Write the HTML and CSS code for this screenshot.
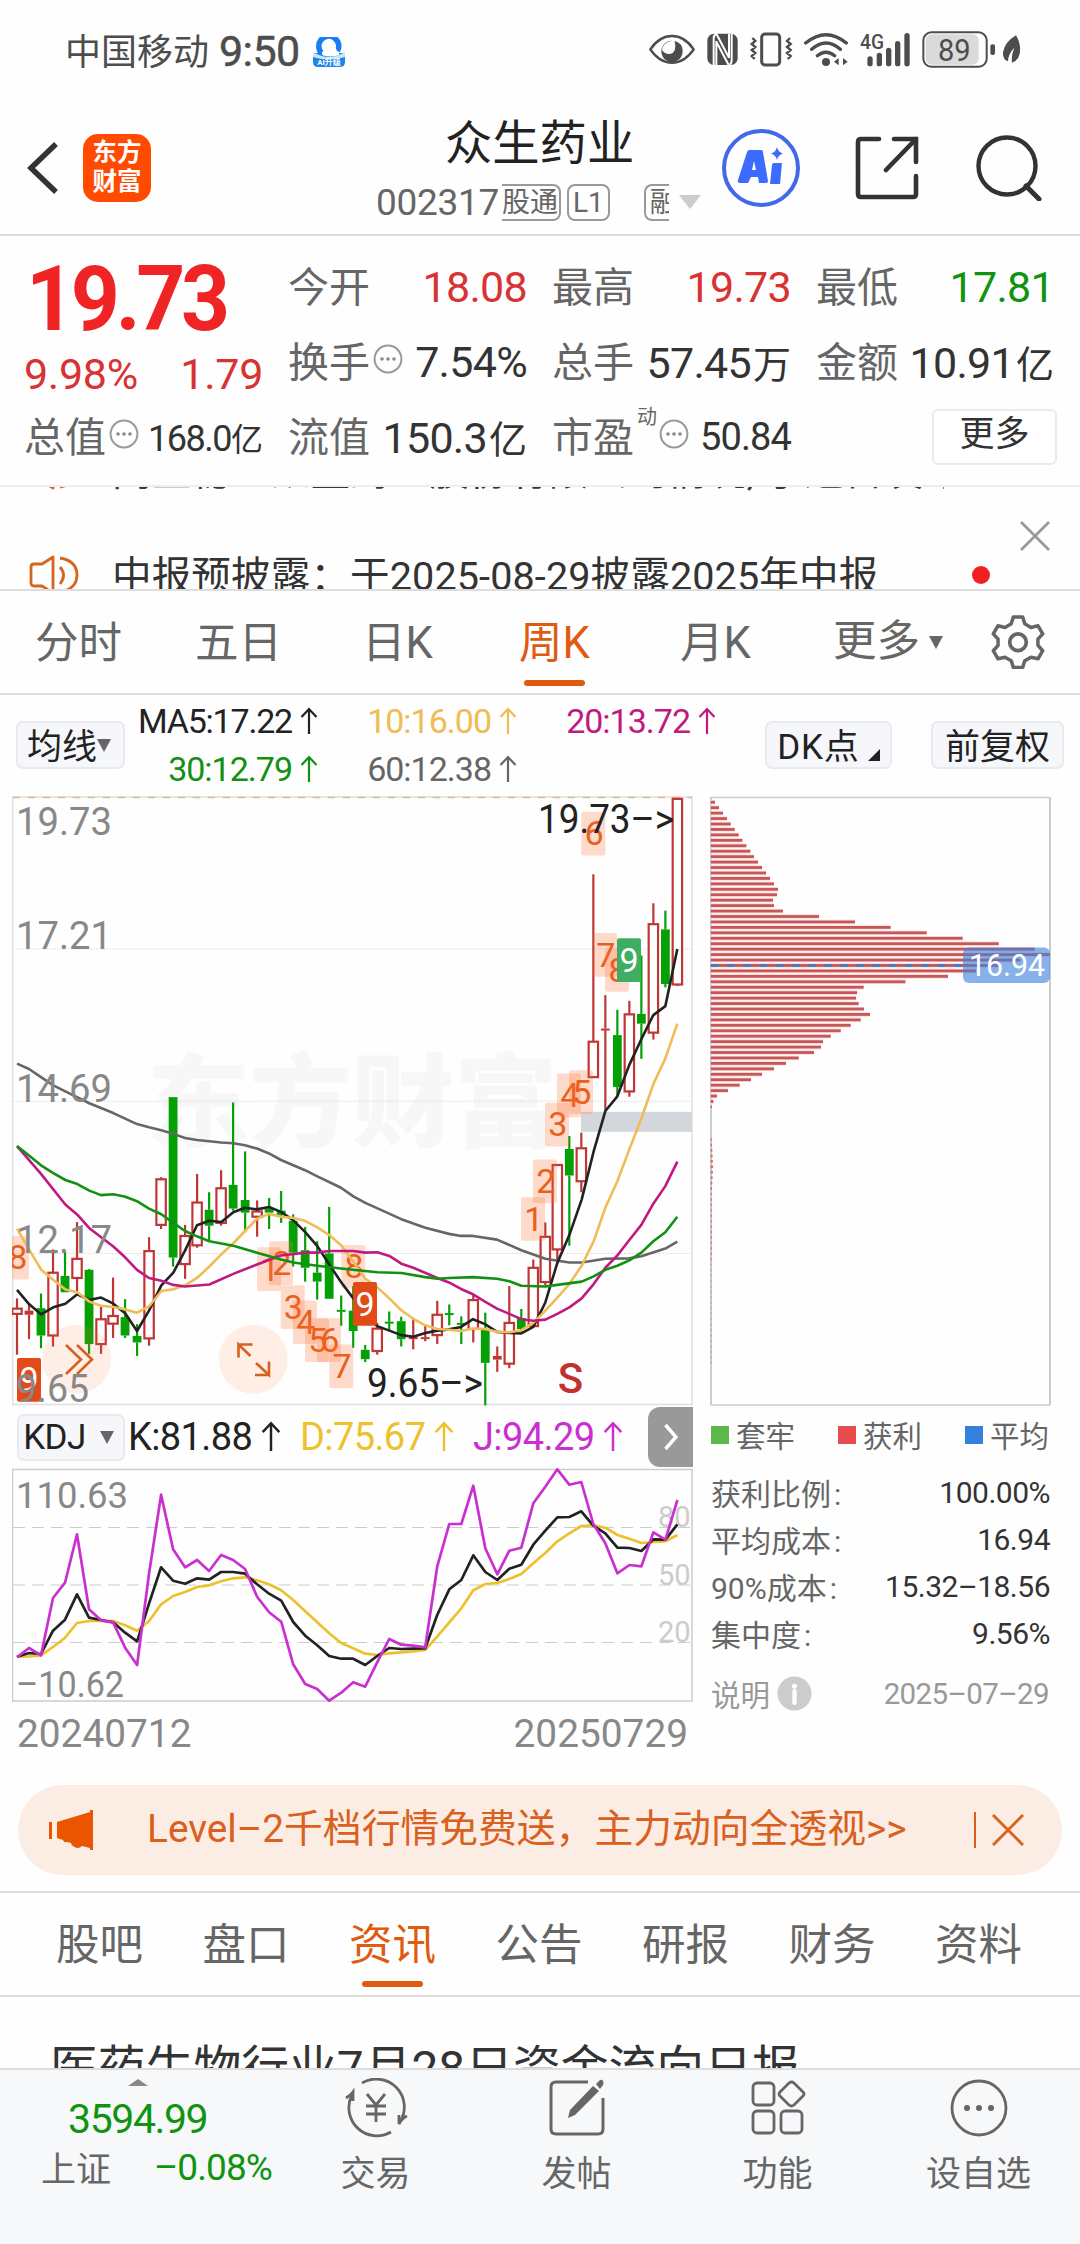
FILE: index.html
```html
<!DOCTYPE html>
<html lang="zh-CN">
<head>
<meta charset="utf-8">
<title>众生药业 002317</title>
<link rel="stylesheet" href="styles.css">
</head>
<body>
<svg class="defs" width="0" height="0">
  <symbol id="up" viewBox="0 0 18 28"><path d="M9 27V2M1.5 10 9 2l7.5 8" fill="none" stroke="currentColor" stroke-width="2.2"/></symbol>
  <symbol id="more-dot" viewBox="0 0 30 30"><circle cx="15" cy="15" r="13.4" fill="none" stroke="#999" stroke-width="2"/><circle cx="9" cy="15" r="1.8" fill="#888"/><circle cx="15" cy="15" r="1.8" fill="#888"/><circle cx="21" cy="15" r="1.8" fill="#888"/></symbol>
  <symbol id="speaker" viewBox="0 0 52 40"><path d="M2 12q0-3 3-3h8L24 2v36l-11-7H5q-3 0-3-3zM31 12q7 8 0 17M31 3q17 3 17 17T31 37" fill="none" stroke="#d4661e" stroke-width="2.8" stroke-linejoin="round"/></symbol>
</svg>
<div class="page">
  <header class="status">
    <span class="carrier">中国移动</span><span class="clock">9:50</span>
    <svg class="weather" viewBox="0 0 32 30"><path d="M0 16h32v9q0 5-5 5H5q-5 0-5-5z" fill="#1c86e8"/><path d="M0 15q16 10 32 0v5q-16 5-32 0z" fill="#c4e8fb"/><path d="M8.500 16a10 10 0 1 1 16-2" fill="none" stroke="#1b7df0" stroke-width="5.500"/><path d="M9 18q0-4 5-4 1-5 6-4 4 1 4 5 3 1 2 3-8 3-17 0z" fill="#fff"/><text x="16" y="28" text-anchor="middle" class="tiny">AI升级</text></svg>
    <svg class="status-icons" viewBox="24 30 1130 125">
      <g fill="none" stroke="#4d4d4d" stroke-width="7.5">
        <path d="M31 91Q58 51 96 51T161 91Q134 131 96 131T31 91z"/>
        <rect x="365" y="45" width="54" height="93" rx="10" stroke-width="9"/>
        <path d="M337 57l9 9-11 9 11 9-11 9 11 9-11 9 9 9M450 57l-9 9 11 9-11 9 11 9-11 9 11 9-9 9" stroke-width="7"/>
        <path d="M497 72Q558 22 619 72M515 91Q558 53 601 91M532 110Q558 89 584 110" stroke-width="10" stroke-linecap="round"/>
        <rect x="850" y="40" width="190" height="103" rx="24" stroke-width="6"/>
      </g>
      <rect x="857" y="46" width="159" height="91" rx="18" fill="#dadada"/>
      <g fill="#4d4d4d">
        <path d="M96 65a32 32 0 1 0 32 32q0-25-24-31 8 34-14 39-15 2-24-12 2-22 30-28z"/>
        <rect x="202" y="44" width="91" height="94" rx="20"/>
        <circle cx="558" cy="129" r="12"/><path d="M596 117v22l-14-11zM609 117v22l14-11z"/>
        <rect x="682" y="112" width="16" height="30" rx="8"/><rect x="710" y="101" width="16" height="41" rx="8"/><rect x="738" y="86" width="16" height="56" rx="8"/><rect x="765" y="66" width="16" height="76" rx="8"/><rect x="793" y="42" width="16" height="100" rx="8"/>
        <rect x="1051" y="76" width="14" height="32" rx="6"/>
        <path d="M1128 49q16 27 11 55-5 22-23 27-3-22 7-45-19 19-19 41-17-6-15-27 5-31 39-51z"/>
      </g>
      <path d="M221 138V58q0-9 8-14l38 72V44M229 66v72M266 138l-37-70M275 44v80q0 8-5 14" fill="none" stroke="#fff" stroke-width="6"/>
      <text x="660" y="89" class="net" textLength="72" lengthAdjust="spacingAndGlyphs">4G</text>
      <text x="943" y="125" class="batt" textLength="98" lengthAdjust="spacingAndGlyphs">89</text>
    </svg>
  </header>

  <nav class="topbar">
    <svg class="back" viewBox="0 0 32 54"><path d="M29 3 4 27l25 24" fill="none" stroke="#333" stroke-width="5.5"/></svg>
    <div class="brand">东方<br>财富</div>
    <div class="title">
      <h1>众生药业</h1>
      <div class="code-row"><span class="code">002317</span><span class="tag cut-left">股通</span><span class="tag">L1</span><span class="tag cut-right">融</span><i class="tri code-tri"></i></div>
    </div>
    <svg class="ai" viewBox="0 0 78 78"><circle cx="39" cy="39" r="37" fill="none" stroke="#4169e8" stroke-width="4"/><path d="M27 21h12q2 0 2 2l5 29q0 2-2 2h-7l-1-6h-7l-3 6h-8q-3 0-2-3l9-28q1-2 2-2zM32 32l-2 9h4zM52 34h8l-2 21h-10l2-19q0-2 2-2zM55 18q1 5 6 6.500-5 1.500-6 6.500-1-5-6-6.500 5-1.500 6-6.500z" fill="#3d6bff" fill-rule="evenodd"/></svg>
    <svg class="share" viewBox="0 0 64 64"><path d="M24 3H6Q3 3 3 6v52q0 3 3 3h52q3 0 3-3V40M39 3h22v23M61 3 31 34" fill="none" stroke="#333" stroke-width="4.6" stroke-linecap="round"/></svg>
    <svg class="search" viewBox="0 0 66 66"><circle cx="31" cy="31" r="28.5" fill="none" stroke="#333" stroke-width="4.4"/><path d="M50 51l13 13" stroke="#333" stroke-width="5" stroke-linecap="round"/></svg>
  </nav>

  <section class="quote">
    <div class="price"><strong>19.73</strong><div class="chg"><span>9.98%</span><span>1.79</span></div></div>
    <div class="cell"><label>今开</label><b class="red">18.08</b></div>
    <div class="cell"><label>最高</label><b class="red">19.73</b></div>
    <div class="cell"><label>最低</label><b class="green">17.81</b></div>
    <div class="cell"><label>换手</label><svg class="dot3"><use href="#more-dot"/></svg><b>7.54%</b></div>
    <div class="cell"><label>总手</label><b>57.45<i>万</i></b></div>
    <div class="cell"><label>金额</label><b>10.91<i>亿</i></b></div>
    <div class="cell small"><label>总值</label><svg class="dot3"><use href="#more-dot"/></svg><b class="cap">168.0<i>亿</i></b></div>
    <div class="cell"><label>流值</label><b>150.3<i>亿</i></b></div>
    <div class="cell small"><label>市盈</label><sup>动</sup><svg class="dot3 pe"><use href="#more-dot"/></svg><b>50.84</b></div>
    <div class="cell"><button class="more-btn">更多</button></div>
  </section>

  <section class="news">
    <div class="ticker">
      <div class="line"><svg><use href="#speaker"/></svg><span>问董秘：众生药业股份有限公司情况, 于近日发布</span></div>
      <div class="line"><svg><use href="#speaker"/></svg><span>中报预披露：于2025-08-29披露2025年中报</span></div>
    </div>
    <i class="reddot"></i>
    <svg class="close" viewBox="0 0 30 30"><path d="M1 1l28 28M29 1 1 29" stroke="#999" stroke-width="2.8"/></svg>
  </section>

  <nav class="periods">
    <span>分时</span><span>五日</span><span>日K</span><span class="on">周K</span><span>月K</span><span class="more">更多<i class="tri"></i></span>
    <svg class="gear" viewBox="0 0 52 52"><path d="M21.500 2h9l2 6.500 6 3.500 6.800-1.600 4.500 7.800-4.600 5v6l4.600 5.200-4.500 7.800-6.800-1.600-6 3.400-2 6.500h-9l-2-6.500-6-3.400-6.800 1.600-4.500-7.800 4.600-5.200v-6l-4.600-5 4.500-7.800 6.800 1.600 6-3.500z" fill="none" stroke="#666" stroke-width="3.4" stroke-linejoin="round"/><circle cx="26" cy="26.200" r="8" fill="none" stroke="#666" stroke-width="3.600"/></svg>
  </nav>

  <section class="ma">
    <button class="chip">均线<i class="tri"></i></button>
    <div class="ma-grid">
      <span class="c-black">MA5:17.22<svg><use href="#up"/></svg></span><span class="c-yellow">10:16.00<svg><use href="#up"/></svg></span><span class="c-pink">20:13.72<svg><use href="#up"/></svg></span>
      <span class="c-green">30:12.79<svg><use href="#up"/></svg></span><span class="c-gray">60:12.38<svg><use href="#up"/></svg></span>
    </div>
    <button class="chip dk">DK点<i class="corner"></i></button>
    <button class="chip fq">前复权</button>
  </section>

  <section class="charts">
    <div class="left">
      <svg id="kline" class="kline" viewBox="12 796 681 611"></svg>
      <div class="kdj-row">
        <button class="chip kdj">KDJ<i class="tri"></i></button>
        <span class="k">K:81.88<svg><use href="#up"/></svg></span><span class="d">D:75.67<svg><use href="#up"/></svg></span><span class="j">J:94.29<svg><use href="#up"/></svg></span>
        <button class="next"><svg viewBox="0 0 14 28"><path d="M1.500 2 12 14 1.500 26" fill="none" stroke="#fff" stroke-width="3.500"/></svg></button>
      </div>
      <svg id="kdj" class="kdj-chart" viewBox="12 1468 681 234"></svg>
      <div class="dates"><span>20240712</span><span>20250729</span></div>
    </div>
    <div class="right">
      <svg id="chips" class="chips" viewBox="710 796 342 611"></svg>
      <div class="legend"><span><i class="sq g"></i>套牢</span><span><i class="sq r"></i>获利</span><span><i class="sq b"></i>平均</span></div>
      <dl class="stats">
        <dt>获利比例<em>:</em></dt><dd>100.00%</dd>
        <dt>平均成本<em>:</em></dt><dd>16.94</dd>
        <dt>90%成本<em>:</em></dt><dd>15.32–18.56</dd>
        <dt>集中度<em>:</em></dt><dd>9.56%</dd>
      </dl>
      <div class="explain"><span>说明</span><svg viewBox="0 0 36 36"><circle cx="18" cy="18" r="17.500" fill="#ccc"/><circle cx="18" cy="10.500" r="2.600" fill="#fff"/><path d="M18 15.500v12" stroke="#fff" stroke-width="4.500" stroke-linecap="round"/></svg><time>2025–07–29</time></div>
    </div>
  </section>

  <aside class="banner">
    <svg class="horn" viewBox="0 0 46 40"><path d="M1 12h3v17H1zM9 12 42 2V0h3v40h-3v-2l-8-2q-4 4-9 0-2-1-2-3l-4-1q-3 1-4-2l-6-2z" fill="#eb5500"/></svg>
    <span>Level–2千档行情免费送，主力动向全透视&gt;&gt;</span>
    <i></i>
    <svg class="x" viewBox="0 0 32 32"><path d="M1 1l30 30M31 1 1 31" stroke="#e0611c" stroke-width="3"/></svg>
  </aside>

  <nav class="tabs"><span>股吧</span><span>盘口</span><span class="on">资讯</span><span>公告</span><span>研报</span><span>财务</span><span>资料</span></nav>

  <section class="article"><h2>医药生物行业7月28日资金流向日报</h2></section>

  <footer class="bottom">
    <div class="index"><i class="up-tri"></i><strong>3594.99</strong><div><span>上证</span><b>–0.08%</b></div></div>
    <div class="act"><svg viewBox="0 0 66 60"><path d="M19 5a28 28 0 0 1 38 39M48 54A28 28 0 0 1 9 17M3 20q5-3 7-6v9M64 38q-5 2-8 8V37" fill="none" stroke="#666" stroke-width="2.800"/><path d="M24 16l9 11 9-11M23 28h20M23 36h20M33 27v17" fill="none" stroke="#666" stroke-width="2.800"/></svg><span>交易</span></div>
    <div class="act"><svg viewBox="0 0 66 60"><path d="M44 4H12q-5 0-5 5v42q0 5 5 5h42q5 0 5-5V20" fill="none" stroke="#666" stroke-width="3"/><path d="M49 8l6 5-24 24-7 3 2-8zM52 6l4-4q2-1 3 1t0 4l-3 4z" fill="#666"/></svg><span>发帖</span></div>
    <div class="act"><svg viewBox="0 0 66 60"><g fill="none" stroke="#666" stroke-width="2.800"><rect x="8" y="5" width="21" height="22" rx="4"/><rect x="8" y="33" width="21" height="22" rx="4"/><rect x="36" y="33" width="21" height="22" rx="4"/><path d="M44 5q2.500-2 5 0l9 9q2 2 0 4l-9 9q-2.500 2-5 0l-9-9q-2-2 0-4z"/></g></svg><span>功能</span></div>
    <div class="act"><svg viewBox="0 0 66 60"><circle cx="33" cy="30" r="27" fill="none" stroke="#666" stroke-width="2.800"/><circle cx="21" cy="30" r="3" fill="#666"/><circle cx="33" cy="30" r="3" fill="#666"/><circle cx="45" cy="30" r="3" fill="#666"/></svg><span>设自选</span></div>
  </footer>
</div>
<script src="charts.js"></script>
</body>
</html>
```
FILE: styles.css
```css
* { box-sizing: border-box; }
body { margin: 0; background: #fefefe; color: #333; font-family: Roboto, "Noto Sans CJK SC", sans-serif; }
i, em { font-style: normal; }
b { font-weight: 400; }
button { border: 0; padding: 0; font: inherit; color: inherit; background: none; }
svg { display: block; flex: none; }
.defs { position: absolute; }
.page { width: 1080px; height: 2244px; display: flex; flex-direction: column; overflow: hidden; }
.page > * { flex: none; }
.tri { width: 0; height: 0; border: 7px solid transparent; border-top: 13px solid #666; border-bottom: 0; }
.red { color: #d83232 !important; }
.green { color: #109410 !important; }

.status { height: 100px; display: flex; align-items: center; padding: 0 55px 0 65px; color: #4d4d4d; }
.carrier { font-size: 36px; width: 154px; padding-bottom: 3px; }
.clock { font-size: 43px; font-weight: 400; letter-spacing: -.6px; width: 94px; line-height: 60px; padding-top: 1px; -webkit-text-stroke: .5px currentColor; }
.weather { width: 32px; height: 30px; margin-top: 3px; }
.tiny { font-size: 8px; font-weight: 700; fill: #fff; }
.status-icons { width: 376.700px; height: 41.700px; margin-left: auto; }
.net { font-size: 62px; font-weight: 500; fill: #4d4d4d; }
.batt { font-size: 93px; font-weight: 400; fill: #4d4d4d; text-anchor: middle; }

.topbar { height: 136px; display: flex; padding: 0 37px 0 27px; border-bottom: 2px solid #ddd; }
.back { width: 32px; height: 54px; margin: 41px 24px 0 0; }
.brand { width: 68px; height: 68px; margin-top: 34px; border-radius: 15px; background: #ff4a00; color: #fff; font-weight: 700; font-size: 24.500px; line-height: 29px; text-align: center; padding-top: 4px; }
.title { width: 326px; margin-left: 225px; display: flex; flex-direction: column; }
h1 { margin: 11px 0 0 69px; font-size: 47.300px; font-weight: 400; line-height: 66px; color: #222; }
.code-row { display: flex; align-items: center; height: 50px; color: #666; }
.code { font-size: 37px; width: 126px; letter-spacing: -.3px; }
.tag { font-size: 28px; height: 37px; line-height: 33px; border: 2px solid #999; border-radius: 8px; padding: 0 4px; margin-right: 6px; letter-spacing: 0; overflow: hidden; white-space: nowrap; flex: none; }
.cut-left { border-left: 0; border-radius: 0 8px 8px 0; padding-left: 0; width: 59px; }
.cut-right { border-right: 0; border-radius: 8px 0 0 8px; width: 25px; margin: 0 10px 0 28px; padding-right: 0; }
.code-tri { border-width: 14px 11px 0; border-top-color: #ccc; }
.ai { width: 78px; height: 78px; margin: 29px 0 0 20px; }
.share { width: 64px; height: 64px; margin: 36px 0 0 55px; }
.search { width: 66px; height: 66px; margin: 35px 0 0 57px; }

.quote { height: 249px; padding: 13px 25px 0 24px; display: grid; grid-template-columns: 239px 239px 239px 238px; grid-template-rows: 75px 75px 75px; column-gap: 25px; justify-content: start; }
.price { grid-row: span 2; display: flex; flex-direction: column; color: #d83232; }
.price strong { font-size: 91px; font-weight: 700; line-height: 100px; letter-spacing: -4.500px; color: #f02424; transform: scaleX(.94); transform-origin: 0 0; margin-left: 2px; }
.chg { display: flex; justify-content: space-between; font-size: 43px; letter-spacing: -.3px; line-height: 50px; }
.cell { display: flex; align-items: center; color: #333; }
.cell label { font-size: 41px; color: #666; flex: none; margin-top: -5px; }
.cell b { margin-left: auto; font-size: 43px; letter-spacing: -.7px; white-space: nowrap; }
.cell b i { font-size: 38px; margin-left: 2px; letter-spacing: 0; }
.cell.small b { font-size: 38px; letter-spacing: -.9px; }
.cell.small .cap { font-size: 36px; letter-spacing: -1.500px; }
.cell.small b i { font-size: 32px; margin-left: 0; }
.dot3 { width: 30px; height: 30px; margin: -6px 0 0 3px; }
.pe { margin-left: 2px; }
.cell sup { font-size: 20px; line-height: 20px; color: #666; margin: -40px 0 0 3px; vertical-align: baseline; }
.more-btn { width: 125px; height: 56px; margin-left: auto; margin-right: -3px; border: 2px solid #ebebed; border-radius: 6px; font-size: 35px; line-height: 46px; padding-bottom: 4px; background: #fff; }

.news { height: 106px; display: flex; border-top: 2px solid #eee; border-bottom: 2px solid #ddd; }
.ticker { width: 944px; height: 102px; overflow: hidden; display: flex; flex-direction: column; justify-content: flex-end; }
.line { flex: none; height: 105px; display: flex; align-items: center; padding-left: 29px; font-size: 39.600px; white-space: nowrap; }
.line:last-child { margin-bottom: -36px; }
.line svg { width: 52px; height: 40px; margin: 4px 31px 0 0; }
.line span { letter-spacing: .1px; }
.reddot { width: 18px; height: 18px; border-radius: 50%; background: #f02020; margin: 79px 0 0 28px; }
.close { width: 30px; height: 30px; margin: 34px 0 0 30px; }

.periods { height: 104px; display: grid; grid-template-columns: 160px 167px 157px 161px 153px 158px 54px; justify-items: start; align-items: center; border-bottom: 2px solid #ddd; font-size: 43.500px; color: #666; padding-left: 35px; }
.periods span { height: 102px; line-height: 106px; }
.periods .more { display: flex; align-items: center; gap: 9px; }
.on { color: #e05a10; display: flex; flex-direction: column; align-items: center; }
.on::after { content: ""; width: 61px; height: 6px; border-radius: 3px; background: #e05a10; margin-top: -17px; flex: none; }
.gear { width: 54px; height: 54px; }

.ma { height: 101px; display: flex; padding: 26px 16px 0; }
.chip { height: 48px; display: flex; align-items: center; justify-content: center; border: 2px solid #e9eaee; border-radius: 7px; background: #f6f7fa; font-size: 35px; color: #222; padding-bottom: 4px; }
.chip .tri { margin-top: 5px; }
.ma .chip:first-child { width: 109px; padding-right: 3px; }
.ma-grid { display: grid; grid-template-columns: 179px 199px 199px; grid-template-rows: 48px 48px; justify-items: end; margin: -24px 0 0 14px; font-size: 34px; letter-spacing: -1px; width: 578px; }
.ma-grid span { display: flex; align-items: center; gap: 8px; height: 48px; }
.ma-grid svg { width: 18px; height: 28px; }
.ma-grid .c-black { letter-spacing: -1.200px; }
.c-black { color: #222; } .c-yellow { color: #efbc55; } .c-pink { color: #c01a80; } .c-green { color: #129012; } .c-gray { color: #666; }
.dk { width: 127px; margin-left: 48px; gap: 8px; letter-spacing: .8px; }
.corner { width: 0; height: 0; border-left: 12px solid transparent; border-bottom: 12px solid #222; margin-top: 24px; }
.fq { width: 133px; margin-left: 39px; }

.charts { height: 965px; display: flex; padding-left: 12px; }
.left { width: 681px; margin-right: 17px; }
.right { width: 342px; }
.kline { width: 681px; height: 611px; }
.kdj-row { height: 60px; display: flex; align-items: center; font-size: 38px; letter-spacing: -.6px; }
.kdj-row span { display: flex; align-items: center; gap: 9px; width: 173px; color: #222; flex: none; }
.kdj-row span svg { width: 20px; height: 33px; margin-top: -2px; }
.kdj-row .k { width: 172px; }
.kdj-row .d { color: #ecc12c; }
.kdj-row .j { color: #c930cf; width: 174px; }
.chip.kdj { width: 108px; height: 47px; margin: 0 3px 0 5px; gap: 14px; letter-spacing: -.5px; flex: none; padding: 0 5px 0 0; }
.chip.kdj .tri { margin-top: 0; }
.next { width: 45px; height: 60px; background: #999; border-radius: 12px 0 0 12px; display: flex; align-items: center; justify-content: center; margin-left: auto; }
.next svg { width: 14px; height: 28px; }
.kdj-chart { width: 681px; height: 234px; margin-top: 1px; }
.dates { display: flex; justify-content: space-between; padding: 0 5px 0 5px; font-size: 38.800px; line-height: 46px; margin-top: 9px; color: #888; }
.chips { width: 342px; height: 611px; }

.legend { display: flex; justify-content: space-between; font-size: 29.500px; color: #666; height: 59px; align-items: center; margin-top: -3px; padding: 0 3px 0 1px; }
.legend span { display: flex; align-items: center; gap: 7px; }
.sq { width: 18px; height: 18px; margin-top: 2px; }
.g { background: #5cb947; } .r { background: #e84c4c; } .b { background: #3580df; }
.stats { display: grid; grid-template-columns: auto auto; justify-content: space-between; grid-auto-rows: 47px; align-items: center; margin: 5px 0 0; padding: 0 2px 0 1px; font-size: 30px; color: #666; }
.stats em { margin-left: 3px; }
.stats dd { margin: 0; text-align: right; color: #333; letter-spacing: -.5px; padding-top: 2px; }
.explain { display: flex; align-items: center; height: 52px; margin-top: 11px; padding: 0 3px 0 1px; font-size: 29.500px; color: #999; }
.explain svg { width: 35px; height: 35px; margin-left: 7px; }
.explain time { margin-left: auto; letter-spacing: -.6px; padding-top: 2px; }

.banner { height: 90px; margin: 24px 18px 16px; border-radius: 45px; background: #fcede4; display: flex; align-items: center; color: #d9601e; padding-left: 30px; font-size: 38.800px; }
.horn { width: 46px; height: 40px; }
.banner span { margin: -11px 0 0 53px; width: 827px; white-space: nowrap; }
.banner i { width: 2px; height: 36px; background: #d9601e; margin-right: 16px; }
.x { width: 32px; height: 32px; }

.tabs { height: 106px; border-top: 2px solid #ddd; border-bottom: 2px solid #ddd; display: flex; justify-content: space-between; padding: 0 58px 0 56px; font-size: 43.500px; color: #666; }
.tabs span { height: 102px; line-height: 106px; }
.tabs .on::after { margin-top: -18px; }
.article { height: 71px; overflow: hidden; padding: 35px 0 0 50px; }
h2 { margin: 0; font-size: 47.800px; line-height: 74px; font-weight: 400; white-space: nowrap; }
.bottom { height: 178px; border-top: 2px solid #dcdcde; background: #f6f8fa; display: flex; color: #666; font-size: 35px; }
.index { width: 275px; display: flex; flex-direction: column; }
.up-tri { width: 0; height: 0; border: 10px solid transparent; border-bottom: 7px solid #888; border-top: 0; margin: 9px 0 0 128px; }
.index strong { font-size: 41px; font-weight: 400; color: #109410; line-height: 50px; margin: 8px 0 0 68px; letter-spacing: -1.400px; }
.index div { display: flex; align-items: center; justify-content: space-between; padding: 0 3px 0 41px; height: 48px; margin-top: -1px; }
.index span { margin-top: -2px; }
.index b { font-size: 37px; color: #109410; letter-spacing: -.9px; }
.act { width: 201px; display: flex; flex-direction: column; align-items: center; }
.act svg { width: 66px; height: 60px; margin-top: 8px; }
.act span { line-height: 50px; margin-top: 12px; }

.axis { font: 39.500px Roboto, sans-serif; fill: #888; }
.note { font: 40px Roboto, sans-serif; fill: #222; font-variant-ligatures: none; }
.mark { font: 34px Roboto, sans-serif; fill: #e8601c; text-anchor: middle; }
.mark.inv { fill: #fff; }
.wm { font: 900 101px "Noto Sans CJK SC", sans-serif; fill: #f7f7f7; }
.sell { font: 500 42px Roboto, sans-serif; fill: #c23030; text-anchor: middle; }
.avg { font: 31.500px Roboto, sans-serif; fill: #fff; }
.kdj-axis { font: 37.500px Roboto, sans-serif; fill: #888; }
.kdj-grid { font: 29px Roboto, sans-serif; fill: #ccc; }
```
FILE: charts.js
```js
const NS = 'http://www.w3.org/2000/svg';
function add(svg, tag, attrs, text) {
  const el = document.createElementNS(NS, tag);
  for (const key in attrs) el.setAttribute(key, attrs[key]);
  if (text !== undefined) el.textContent = text;
  svg.appendChild(el);
}
const RED = '#bf3636', GREEN = '#05a005';
/* Chart data units to pixels */
const X = v => +(v / 3).toFixed(2);
const Y = v => +(780 + v / 2.45).toFixed(2);
const slot = i => 17 + 12.007 * i;
const fit = 'spacingAndGlyphs';

/* Weekly candles: [up?, bodyTop, bodyBottom, high, low] */
const candles = [
  [1,1294,1308,1270,1408],[1,1300,1310,1285,1370],[0,1294,1361,1258,1392],[1,1206,1361,1150,1388],
  [0,1215,1255,1155,1255],[1,1172,1220,1083,1255],[0,1200,1382,1198,1406],[1,1320,1382,1290,1406],
  [1,1312,1332,1219,1367],[0,1316,1361,1272,1367],[0,1362,1378,1333,1411],[1,1153,1368,1120,1386],
  [1,977,1090,973,1100],[0,777,1170,777,1192],[1,1116,1186,1090,1222],[1,1034,1140,965,1146],
  [0,1053,1092,1010,1130],[1,999,1085,956,1092],[0,992,1050,790,1055],[0,1029,1060,910,1108],
  [1,1056,1070,1030,1119],[0,1050,1060,1024,1100],[0,1055,1066,1007,1085],[0,1080,1158,1064,1192],
  [0,1152,1195,1095,1229],[0,1207,1229,1130,1273],[0,1160,1271,1046,1271],[0,1298,1303,1263,1337],
  [0,1300,1350,1240,1391],[0,1396,1419,1384,1426],[1,1343,1399,1330,1408],[0,1327,1331,1302,1348],
  [0,1326,1370,1315,1388],[1,1365,1369,1319,1395],[1,1365,1369,1337,1375],[1,1309,1360,1276,1382],
  [0,1306,1311,1285,1336],[0,1330,1334,1314,1382],[1,1273,1345,1262,1378],[0,1345,1428,1305,1532],
  [1,1411,1420,1388,1450],[1,1329,1430,1240,1441],[0,1318,1345,1296,1352],[1,1194,1338,1175,1338],
  [1,1118,1230,1084,1238],[1,942,1150,942,1175],[0,904,969,872,1141],[1,901,983,864,1010],
  [1,640,728,231,728],[1,609,613,527,808],[0,625,752,563,775],[1,573,763,541,776],
  [0,573,597,430,683],[1,352,619,302,636],[0,366,500,320,508],[1,45,501,45,505]
];

const averages = {
  '#666666': '51,695 87,708 123,728 160,748 196,763 268,792 340,816 411,843 447,851 484,858 520,867 555,877 591,882 664,888 700,890 735,895 771,903 807,915 843,931 915,956 952,971 1023,999 1060,1020 1096,1036 1204,1076 1276,1097 1347,1112 1383,1117 1419,1117 1491,1126 1564,1152 1636,1173 1708,1182 1745,1182 1816,1173 1888,1172 1924,1167 1996,1148 2032,1131',
  '#222222': '51,1249 87,1284 123,1309 160,1292 196,1283 232,1260 268,1274 303,1268 340,1283 376,1307 411,1350 447,1300 484,1238 520,1207 555,1153 591,1091 628,1080 664,1083 700,1059 735,1048 771,1052 807,1046 843,1058 880,1079 915,1107 952,1142 988,1187 1023,1230 1060,1270 1096,1315 1132,1338 1168,1349 1204,1360 1240,1364 1276,1355 1312,1349 1347,1346 1383,1340 1419,1321 1455,1333 1491,1352 1528,1355 1564,1356 1600,1340 1636,1280 1672,1183 1708,1115 1745,1028 1781,910 1816,811 1852,775 1888,698 1924,635 1960,576 1996,554 2032,414',
  '#f0bc58': '51,1099 87,1150 123,1199 160,1225 196,1248 232,1255 268,1278 303,1288 340,1291 376,1297 411,1305 447,1290 484,1252 520,1248 555,1238 591,1220 628,1192 664,1162 700,1135 735,1105 771,1075 807,1063 843,1070 880,1073 915,1080 952,1096 988,1115 1023,1140 1060,1180 1096,1222 1132,1243 1168,1270 1204,1299 1240,1320 1276,1336 1312,1345 1347,1347 1383,1350 1419,1344 1455,1345 1491,1352 1528,1353 1564,1348 1600,1330 1636,1300 1672,1268 1708,1235 1745,1190 1781,1130 1816,1048 1852,983 1888,905 1924,830 1960,745 1996,682 2032,597',
  '#c01a80': '51,897 123,965 196,1040 232,1065 268,1098 340,1143 376,1170 411,1200 447,1220 484,1227 520,1237 555,1241 628,1236 700,1210 771,1187 843,1165 915,1158 952,1158 988,1154 1060,1154 1096,1158 1132,1157 1168,1166 1204,1185 1240,1195 1312,1220 1347,1231 1383,1247 1419,1260 1455,1278 1491,1295 1528,1308 1564,1321 1600,1325 1636,1322 1672,1308 1708,1292 1745,1270 1781,1235 1816,1195 1852,1165 1888,1127 1924,1090 1960,1038 1996,995 2032,935',
  '#129012': '51,897 87,920 123,944 160,963 196,980 232,990 268,1006 303,1017 340,1015 376,1021 411,1032 447,1050 484,1064 520,1085 555,1105 591,1118 628,1130 700,1141 771,1158 843,1175 880,1182 952,1190 1023,1197 1132,1206 1204,1208 1276,1218 1312,1222 1347,1220 1419,1218 1491,1222 1528,1228 1564,1239 1636,1241 1672,1237 1745,1229 1781,1216 1816,1200 1852,1190 1888,1177 1924,1158 1960,1130 1996,1108 2032,1070'
};

/* Nine-turn markers: [digit, centreX, top, solid fill] */
const LIGHT = 'rgba(255,110,50,.25)';
const marks = [
  ['8',51,1117],['1',807,1145],['2',843,1130],['3',878,1238],['4',915,1275],['5',951,1319],['6',987,1319],['7',1024,1383],['8',1060,1139],
  ['9',87,1416,'#e24a18'],
  ['1',1599,1022],['2',1635,930],['3',1671,791],['4',1707,719],['5',1743,711],['6',1780,78],['7',1815,375],['8',1851,412],['9',1887,388,'#3fae62']
];

const k = document.getElementById('kline');
function drawMark([digit, x, top, fill]) {
  const left = Math.max(12, X(x) - 12);
  add(k, 'rect', { x: left, y: Y(top), width: X(x) + 12 - left, height: 43.7, rx: 2, fill: fill || LIGHT });
  add(k, 'text', { x: X(x) + (fill ? 0 : .7), y: Y(top) + 33.5, class: fill ? 'mark inv' : 'mark' }, digit);
}
add(k, 'text', { x: 147, y: 1139, class: 'wm', textLength: 410, lengthAdjust: fit }, '东方财富');
[414, 787, 1160].forEach(v => add(k, 'line', { x1: 13, x2: 692, y1: Y(v), y2: Y(v), stroke: '#d8d8d8', 'stroke-width': 1, 'stroke-dasharray': '1.300 1.300' }));
add(k, 'rect', { x: 12.7, y: 797, width: 679.3, height: 607.500, fill: 'none', stroke: '#e3e3e3', 'stroke-width': 1.700 });
add(k, 'line', { x1: 12.7, x2: 692, y1: 797.5, y2: 797.5, stroke: '#d9bd93', 'stroke-width': 1.3, 'stroke-dasharray': '7.500 7.500' });
add(k, 'rect', { x: 581, y: Y(813), width: 111, height: 20, fill: '#d3d7db' });
candles.forEach(([up, top, bottom, high, low], i) => {
  const x = slot(i), color = up ? RED : GREEN, w = 2.2;
  add(k, 'line', { x1: x, x2: x, y1: Y(high), y2: Y(top), stroke: color, 'stroke-width': w });
  add(k, 'line', { x1: x, x2: x, y1: Y(bottom), y2: Y(low), stroke: color, 'stroke-width': w });
  if (up && bottom - top > 12) add(k, 'rect', { x: x - 4.7, y: Y(top) + .5, width: 9.4, height: Y(bottom) - Y(top) - .5, fill: '#fff', stroke: color, 'stroke-width': w });
  else add(k, 'rect', { x: x - 4.4, y: Y(top), width: 8.8, height: Math.max(2, Y(bottom) - Y(top)), fill: color });
});
marks.forEach(drawMark);
for (const color in averages) {
  const points = averages[color].split(' ').map(p => p.split(',')).map(([x, y]) => `${X(x)},${Y(y)}`).join(' ');
  add(k, 'polyline', { points, fill: 'none', stroke: color, 'stroke-width': 2.600, 'stroke-linejoin': 'round' });
}
drawMark(['9', 1095, 1230, '#e24a18']);
[76.700, 253.300].forEach(x => add(k, 'circle', { cx: x, cy: 1359.200, r: 34.500, fill: 'rgba(255,120,60,.12)' }));
add(k, 'path', { d: 'M66 1345l15 14.500-15 14.500M77 1345l15 14.500-15 14.500M250.500 1356l-12-11.500v13m0-13h14M256 1363l13 12v-13.500m0 13.500h-14', fill: 'none', stroke: '#d8601e', 'stroke-width': 2.600 });
[['19.73',134],['17.21',413],['14.69',789],['12.17',1160]].forEach(([t, v]) => add(k, 'text', { x: 16, y: Y(v), class: 'axis', textLength: 96, lengthAdjust: fit }, t));
add(k, 'text', { x: 16, y: Y(1524), class: 'axis', textLength: 73, lengthAdjust: fit }, '9.65');
add(k, 'text', { x: 538, y: Y(129), class: 'note', textLength: 136, lengthAdjust: fit }, '19.73–>');
add(k, 'text', { x: 367, y: Y(1511), class: 'note', textLength: 116, lengthAdjust: fit }, '9.65–>');
add(k, 'text', { x: 570.500, y: Y(1503), class: 'sell' }, 'S');

/* Cost distribution, one bar per price step */
const costs = [75,87,99,111,122,134,146,157,169,181,192,204,216,228,240,252,264,261,249,252,279,387,495,602,710,818,926,1034,1080,991,930,858,774,646,521,501,498,506,522,540,512,482,452,422,399,393,372,326,288,252,216,183,149,114,81,70,66];
const c = document.getElementById('chips');
add(c, 'path', { d: 'M710.500 797.500H1050M710.500 1405H1050', stroke: '#ccc', 'stroke-width': 1.300 });
add(c, 'path', { d: 'M711 797V1405M1050 797V1405', stroke: '#ccc', 'stroke-width': 2 });
costs.forEach((end, i) => {
  const y = Y(54.5 + 13.33 * i), width = (end - 62) / 3;
  add(c, 'rect', { x: 710.700, y: y - 2.400, width, height: 4.800, fill: '#fbe3e3' });
  add(c, 'rect', { x: 710.700, y: y - 1.400, width, height: 2.800, fill: '#c75656' });
});
for (let i = 62; i < 104; i++) {
  const width = i < 72 ? 2.500 - Math.abs(67 - i) * .3 : 1;
  add(c, 'rect', { x: 710.700, y: Y(51 + 13.33 * i), width, height: 2.800, fill: '#c75656', opacity: i < 85 ? .8 : .4 });
}
add(c, 'line', { x1: 710.700, x2: 963, y1: Y(454.4), y2: Y(454.4), stroke: '#3b7fc8', 'stroke-width': 2.800, 'stroke-dasharray': '7.700 8.500' });
add(c, 'rect', { x: 963, y: 947.400, width: 87, height: 35.500, rx: 6, fill: 'rgba(62,130,220,.62)' });
add(c, 'text', { x: 969, y: 976, class: 'avg', textLength: 76, lengthAdjust: fit }, '16.94');

/* KDJ oscillator: depth below y=1400, three units to a pixel */
const kdj = {
  '#ecc12c': [770,769,766,741,713,669,663,662,663,676,692,663,613,588,576,561,556,544,535,532,541,553,571,600,634,667,700,729,745,761,765,760,757,754,750,710,667,625,571,552,549,537,522,490,459,424,400,378,376,383,405,416,429,426,424,405],
  '#222222': [770,759,762,692,659,583,653,660,667,698,724,610,502,542,551,535,539,516,516,521,553,581,602,666,707,736,768,776,776,795,768,744,747,746,745,645,568,540,466,516,540,506,494,434,392,352,351,334,377,400,443,444,453,418,419,373],
  '#c930cf': [772,744,766,594,548,403,628,661,667,743,795,520,284,448,502,480,513,465,480,507,590,637,665,793,852,867,902,878,847,860,787,717,734,737,742,500,372,372,257,445,523,452,443,310,260,208,254,246,372,430,520,495,499,397,419,300]
};
const o = document.getElementById('kdj');
add(o, 'rect', { x: 12.5, y: 1469.500, width: 679.500, height: 231.500, fill: 'none', stroke: '#ccc', 'stroke-width': 1.5 });
[[80,1527.500],[50,1585],[20,1642.500]].forEach(([v, y]) => {
  add(o, 'line', { x1: 13, x2: 692, y1: y, y2: y, stroke: '#ccc', 'stroke-width': 1.2, 'stroke-dasharray': '12 7' });
  add(o, 'text', { x: 658, y: y - .5, class: 'kdj-grid' }, v);
});
add(o, 'text', { x: 16, y: 1507.500, class: 'kdj-axis', textLength: 112, lengthAdjust: fit }, '110.63');
add(o, 'text', { x: 16, y: 1696.500, class: 'kdj-axis', textLength: 108, lengthAdjust: fit }, '–10.62');
for (const color in kdj) {
  const points = kdj[color].map((v, i) => `${slot(i).toFixed(1)},${(1400 + v / 3).toFixed(1)}`).join(' ');
  add(o, 'polyline', { points, fill: 'none', stroke: color, 'stroke-width': 2.700, 'stroke-linejoin': 'round' });
}
```
